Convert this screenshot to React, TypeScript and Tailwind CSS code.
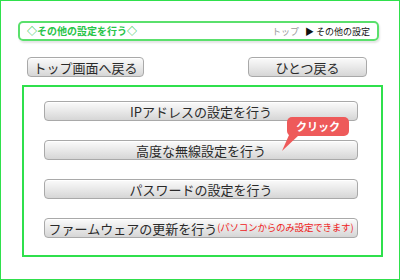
const jp = { fontFamily: '"Noto Sans CJK JP", "Liberation Sans", sans-serif' }

function GrayButton({ children, className = '' }: { children: React.ReactNode; className?: string }) {
  return (
    <div
      className={`flex h-[20px] items-center justify-center whitespace-nowrap rounded-[4px] border border-[#a9a9a9] bg-gradient-to-b from-[#fbfbfb] via-[#e9e9e9] to-[#d6d6d6] text-[13px] leading-none text-[#2a2a2a] shadow-[inset_0_1px_0_#fff] ${className}`}
    >
      {children}
    </div>
  )
}

export default function App() {
  const items = ['IPアドレスの設定を行う', '高度な無線設定を行う', 'パスワードの設定を行う']

  return (
    <div style={jp} className="relative h-[280px] w-[400px] border border-[#2fe04c] bg-white">
      <div className="ml-[17px] mt-[20px] flex h-[20px] w-[361px] items-center justify-between rounded-[5px] border-2 border-[#5ae06c] px-[7px] shadow-[1px_2px_2px_#e4e4e4]">
        <span className="text-[10px] font-bold leading-none text-[#28c448]">◇その他の設定を行う◇</span>
        <span className="text-[9px] leading-none">
          <span className="text-[#9a9a9a]">トップ</span>
          <span className="ml-[6px] text-[#111]">▶ その他の設定</span>
        </span>
      </div>

      <div className="mt-[16px] flex">
        <GrayButton className="ml-[26px] w-[117px]">トップ画面へ戻る</GrayButton>
        <GrayButton className="ml-[104px] w-[119px]">ひとつ戻る</GrayButton>
      </div>

      <div className="ml-[21px] mt-[8px] flex h-[172px] w-[361px] flex-col gap-[19px] border-2 border-[#2fe04c] pl-[20px] pt-[14px]">
        {items.map((t) => (
          <GrayButton key={t} className="w-[314px]">
            {t}
          </GrayButton>
        ))}
        <GrayButton className="w-[314px] text-[12px]">
          ファームウェアの更新を行う
          <span className="text-[9.5px] tracking-[-0.2px] text-[#ee2222]">(パソコンからのみ設定できます)</span>
        </GrayButton>
      </div>

      <div className="absolute left-[286px] top-[116px] flex h-[19px] w-[62px] items-center justify-center rounded-[5px] bg-[#ee5a5a] text-[11px] font-bold leading-none text-white">
        クリック
      </div>
      <svg className="absolute left-[279px] top-[133px]" width="24" height="18" viewBox="0 0 24 18">
        <path d="M9 1 L19 1 L2 17 Z" fill="#ee5a5a" />
      </svg>
    </div>
  )
}
